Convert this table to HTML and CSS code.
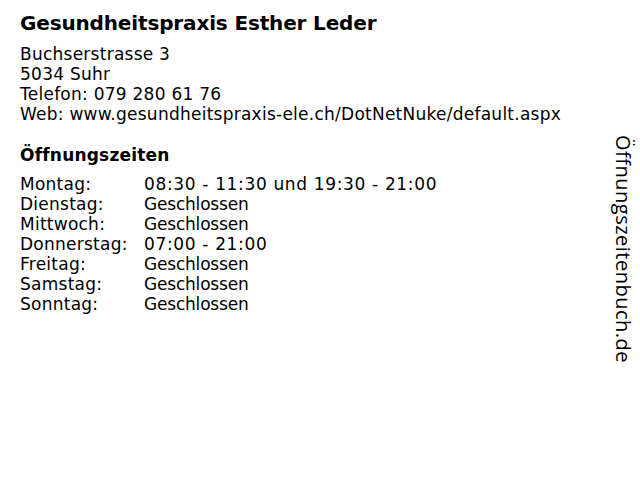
FILE: index.html
```html
<!DOCTYPE html>
<html lang="de">
<head>
<meta charset="utf-8">
<title>Gesundheitspraxis Esther Leder</title>
<link rel="stylesheet" href="styles.css">
</head>
<body>
<div class="page">
  <main class="main">
    <h1 class="title">Gesundheitspraxis Esther Leder</h1>
    <div class="address">
      <div>Buchserstrasse 3</div>
      <div>5034 Suhr</div>
      <div>Telefon: 079 280 61 76</div>
      <div>Web: www.gesundheitspraxis-ele.ch/DotNetNuke/default.aspx</div>
    </div>
    <h2 class="subtitle">Öffnungszeiten</h2>
    <div class="hours">
      <div class="day">Montag:</div><div class="time num">08:30 - 11:30 und 19:30 - 21:00</div>
      <div class="day">Dienstag:</div><div class="time">Geschlossen</div>
      <div class="day">Mittwoch:</div><div class="time">Geschlossen</div>
      <div class="day">Donnerstag:</div><div class="time num">07:00 - 21:00</div>
      <div class="day">Freitag:</div><div class="time">Geschlossen</div>
      <div class="day">Samstag:</div><div class="time">Geschlossen</div>
      <div class="day">Sonntag:</div><div class="time">Geschlossen</div>
    </div>
  </main>
  <aside class="side">Öffnungszeitenbuch.de</aside>
</div>
</body>
</html>
```
FILE: styles.css
```css
html, body {
  margin: 0;
  padding: 0;
  background: #fff;
}
body {
  font-family: "DejaVu Sans", Verdana, sans-serif;
  color: #000;
}
.page {
  display: flex;
  justify-content: space-between;
  width: 640px;
  height: 480px;
}
.main {
  padding: 11px 0 0 20px;
}
.title {
  margin: 0;
  font-size: 20px;
  line-height: 24px;
  font-weight: bold;
  letter-spacing: -0.15px;
}
.address {
  margin-top: 9px;
  font-size: 17px;
  line-height: 20px;
  letter-spacing: 0.25px;
}
.subtitle {
  margin: 20px 0 0 0;
  font-size: 17px;
  line-height: 22px;
  font-weight: bold;
  letter-spacing: 0.2px;
}
.hours {
  margin-top: 8px;
  display: grid;
  grid-template-columns: 124px auto;
  font-size: 17px;
  line-height: 20px;
}
.day {
  letter-spacing: 0.25px;
}
.time {
  letter-spacing: -0.2px;
}
.time.num {
  letter-spacing: 0.65px;
}
.side {
  writing-mode: vertical-rl;
  font-family: "Open Sans", sans-serif;
  font-size: 20px;
  line-height: 28px;
  letter-spacing: 0.5px;
  margin: 135px 3px 0 0;
  align-self: flex-start;
}
```
